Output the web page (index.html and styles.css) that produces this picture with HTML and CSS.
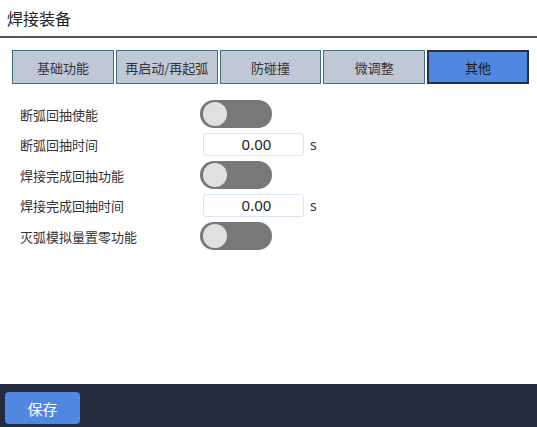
FILE: index.html
```html
<!DOCTYPE html>
<html lang="zh">
<head>
<meta charset="utf-8">
<link rel="stylesheet" href="styles.css">
</head>
<body>
<div class="page">
  <div class="header">焊接装备</div>
  <div class="tabs">
    <div class="tab">基础功能</div>
    <div class="tab">再启动/再起弧</div>
    <div class="tab">防碰撞</div>
    <div class="tab">微调整</div>
    <div class="tab active">其他</div>
  </div>
  <div class="form">
    <div class="row toggle-row">
      <div class="label">断弧回抽使能</div>
      <div class="switch"><div class="knob"></div></div>
    </div>
    <div class="row input-row">
      <div class="label">断弧回抽时间</div>
      <div class="input">0.00</div>
      <div class="unit">s</div>
    </div>
    <div class="row toggle-row">
      <div class="label">焊接完成回抽功能</div>
      <div class="switch"><div class="knob"></div></div>
    </div>
    <div class="row input-row">
      <div class="label">焊接完成回抽时间</div>
      <div class="input">0.00</div>
      <div class="unit">s</div>
    </div>
    <div class="row toggle-row">
      <div class="label">灭弧模拟量置零功能</div>
      <div class="switch"><div class="knob"></div></div>
    </div>
  </div>
  <div class="spacer"></div>
  <div class="footer">
    <div class="save">保存</div>
  </div>
</div>
</body>
</html>
```
FILE: styles.css
```css
* { box-sizing: border-box; }
html, body { margin: 0; padding: 0; }
body {
  width: 537px;
  height: 427px;
  overflow: hidden;
  background: #fff;
  font-family: "Noto Sans CJK SC", "Noto Sans", sans-serif;
  color: #333;
}
.page {
  height: 427px;
  display: flex;
  flex-direction: column;
}
.header {
  height: 38px;
  padding: 7px 0 0 7px;
  font-size: 16px;
  line-height: 22px;
  color: #222;
  border-bottom: 2px solid #555;
}
.tabs {
  display: flex;
  gap: 2px;
  padding: 12px 8px 0 12px;
}
.tab {
  width: 102px;
  height: 34px;
  display: flex;
  align-items: center;
  justify-content: center;
  background: #c1c8d5;
  border: 1px solid #3f6f7e;
  font-size: 13px;
  color: #333;
}
.tab.active {
  background: #5087e1;
  border: 2px solid #223044;
  color: #1a1a1a;
}
.form {
  display: flex;
  flex-direction: column;
  gap: 5px;
  padding: 16px 0 0 20px;
}
.row {
  display: flex;
  align-items: center;
}
.label {
  width: 180px;
  font-size: 13px;
  color: #333;
}
.switch {
  width: 72px;
  height: 28px;
  border-radius: 14px;
  background: #787878;
  padding: 2px 0 0 3px;
}
.knob {
  width: 24px;
  height: 24px;
  border-radius: 50%;
  background: #e0e0e0;
}
.input {
  margin-left: 3px;
  width: 101px;
  height: 23px;
  border: 1px solid #d8e7f5;
  border-radius: 3px;
  font-family: "Noto Sans", sans-serif;
  font-size: 15px;
  line-height: 21px;
  text-align: center;
  color: #222;
  padding-left: 6px;
}
.unit {
  margin-left: 6px;
  font-family: "Noto Sans", sans-serif;
  font-size: 14px;
  color: #333;
}
.spacer { flex: 1; }
.footer {
  height: 43px;
  background: #252b3f;
  padding: 8px 0 0 5px;
}
.save {
  width: 75px;
  height: 32px;
  border-radius: 4px;
  background: #5087e1;
  color: #fff;
  font-size: 15px;
  display: flex;
  align-items: center;
  justify-content: center;
}
```
